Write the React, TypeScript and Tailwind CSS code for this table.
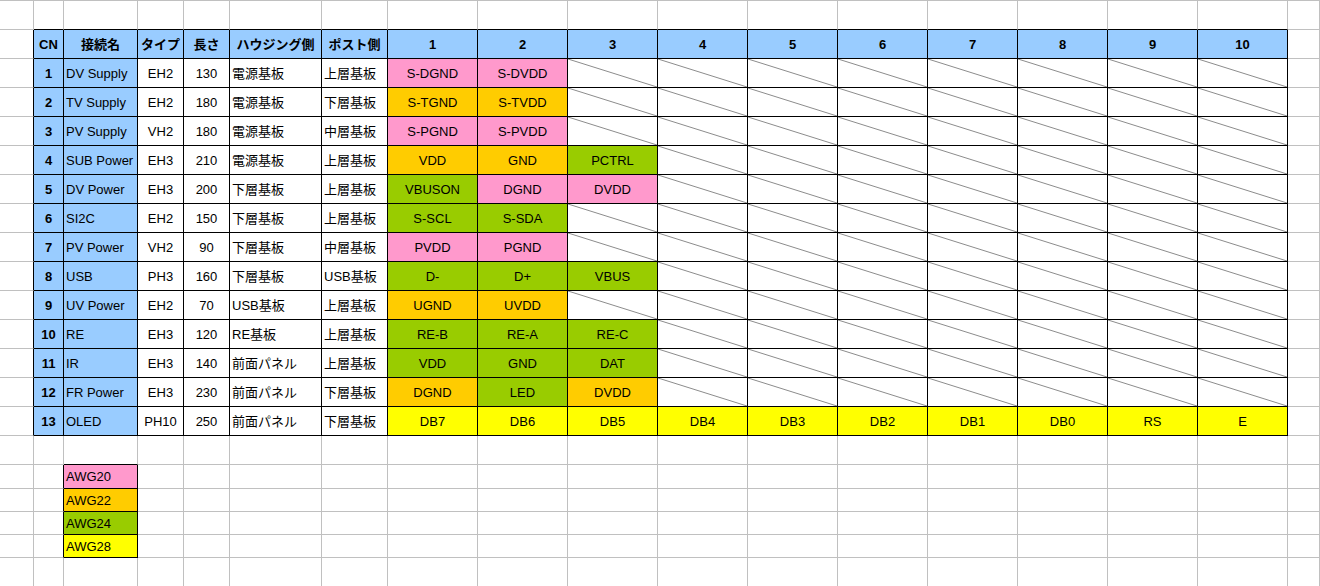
type Pin = [string, "P" | "O" | "G" | "Y"];

type Row = {
  cn: number;
  name: string;
  type: string;
  len: number;
  housing: string;
  post: string;
  pins: Pin[];
};

const fill = {
  P: "bg-[#ff99cc]",
  O: "bg-[#ffcc00]",
  G: "bg-[#99cc00]",
  Y: "bg-[#ffff00]",
};

const headers = ["CN", "接続名", "タイプ", "長さ", "ハウジング側", "ポスト側"];

const rows: Row[] = [
  { cn: 1, name: "DV Supply", type: "EH2", len: 130, housing: "電源基板", post: "上層基板", pins: [["S-DGND", "P"], ["S-DVDD", "P"]] },
  { cn: 2, name: "TV Supply", type: "EH2", len: 180, housing: "電源基板", post: "下層基板", pins: [["S-TGND", "O"], ["S-TVDD", "O"]] },
  { cn: 3, name: "PV Supply", type: "VH2", len: 180, housing: "電源基板", post: "中層基板", pins: [["S-PGND", "P"], ["S-PVDD", "P"]] },
  { cn: 4, name: "SUB Power", type: "EH3", len: 210, housing: "電源基板", post: "上層基板", pins: [["VDD", "O"], ["GND", "O"], ["PCTRL", "G"]] },
  { cn: 5, name: "DV Power", type: "EH3", len: 200, housing: "下層基板", post: "上層基板", pins: [["VBUSON", "G"], ["DGND", "P"], ["DVDD", "P"]] },
  { cn: 6, name: "SI2C", type: "EH2", len: 150, housing: "下層基板", post: "上層基板", pins: [["S-SCL", "G"], ["S-SDA", "G"]] },
  { cn: 7, name: "PV Power", type: "VH2", len: 90, housing: "下層基板", post: "中層基板", pins: [["PVDD", "P"], ["PGND", "P"]] },
  { cn: 8, name: "USB", type: "PH3", len: 160, housing: "下層基板", post: "USB基板", pins: [["D-", "G"], ["D+", "G"], ["VBUS", "G"]] },
  { cn: 9, name: "UV Power", type: "EH2", len: 70, housing: "USB基板", post: "上層基板", pins: [["UGND", "O"], ["UVDD", "O"]] },
  { cn: 10, name: "RE", type: "EH3", len: 120, housing: "RE基板", post: "上層基板", pins: [["RE-B", "G"], ["RE-A", "G"], ["RE-C", "G"]] },
  { cn: 11, name: "IR", type: "EH3", len: 140, housing: "前面パネル", post: "上層基板", pins: [["VDD", "G"], ["GND", "G"], ["DAT", "G"]] },
  { cn: 12, name: "FR Power", type: "EH3", len: 230, housing: "前面パネル", post: "下層基板", pins: [["DGND", "O"], ["LED", "G"], ["DVDD", "O"]] },
  {
    cn: 13, name: "OLED", type: "PH10", len: 250, housing: "前面パネル", post: "下層基板",
    pins: [["DB7", "Y"], ["DB6", "Y"], ["DB5", "Y"], ["DB4", "Y"], ["DB3", "Y"], ["DB2", "Y"], ["DB1", "Y"], ["DB0", "Y"], ["RS", "Y"], ["E", "Y"]],
  },
];

const legend: Pin[] = [["AWG20", "P"], ["AWG22", "O"], ["AWG24", "G"], ["AWG28", "Y"]];

const ROWS = 21;
const COLS = 18;

// table: rows 1-14, cols 1-16 ; legend: rows 16-19, col 2
function boxed(r: number, c: number) {
  if (r >= 1 && r <= 14 && c >= 1 && c <= 16) return true;
  if (r >= 16 && r <= 19 && c === 2) return true;
  return false;
}

type Info = { text?: string | number; bg?: string; left?: boolean; bold?: boolean; diag?: boolean };

function info(r: number, c: number): Info {
  if (r === 1 && c >= 1 && c <= 6) return { text: headers[c - 1], bg: "bg-[#99ccff]", bold: true };
  if (r === 1 && c >= 7 && c <= 16) return { text: c - 6, bg: "bg-[#99ccff]", bold: true };
  if (r >= 2 && r <= 14 && c >= 1 && c <= 16) {
    const d = rows[r - 2];
    if (c === 1) return { text: d.cn, bg: "bg-[#99ccff]", bold: true };
    if (c === 2) return { text: d.name, bg: "bg-[#99ccff]", left: true };
    if (c === 3) return { text: d.type };
    if (c === 4) return { text: d.len };
    if (c === 5) return { text: d.housing, left: true };
    if (c === 6) return { text: d.post, left: true };
    const p = d.pins[c - 7];
    if (p) return { text: p[0], bg: fill[p[1]] };
    return { diag: true };
  }
  if (r >= 16 && r <= 19 && c === 2) {
    const l = legend[r - 16];
    return { text: l[0], bg: fill[l[1]], left: true };
  }
  return {};
}

function Cell({ r, c }: { r: number; c: number }) {
  const i = info(r, c);
  const rightBlack = boxed(r, c) || boxed(r, c + 1);
  const bottomBlack = boxed(r, c) || boxed(r + 1, c);
  return (
    <div
      className={[
        "relative flex items-center overflow-hidden whitespace-nowrap border-r border-b",
        r === 0 ? "border-t border-t-[#c0c0c0]" : "",
        rightBlack ? "border-r-black" : "border-r-[#c0c0c0]",
        bottomBlack ? "border-b-black" : "border-b-[#c0c0c0]",
        i.left ? "justify-start pl-[2px]" : "justify-center",
        i.bold ? "font-bold" : "",
        i.bg ?? "bg-white",
      ].join(" ")}
    >
      {i.diag && (
        <svg className="absolute inset-0 h-full w-full" preserveAspectRatio="none">
          <line x1="0" y1="0" x2="100%" y2="100%" stroke="#8c8c8c" strokeWidth="1" />
        </svg>
      )}
      {i.text !== undefined && <span className="leading-none">{i.text}</span>}
    </div>
  );
}

export default function App() {
  const cells = [];
  for (let r = 0; r < ROWS; r++) {
    for (let c = 0; c < COLS; c++) {
      cells.push(<Cell key={`${r}-${c}`} r={r} c={c} />);
    }
  }
  return (
    <div className="h-[586px] w-[1320px] overflow-hidden bg-white font-['Liberation_Sans','Noto_Sans_CJK_JP',sans-serif] text-[13px] text-black">
      <div className="grid grid-cols-[34px_30px_74px_46px_46px_92px_66px_repeat(10,90px)_32px] grid-rows-[30px_repeat(15,29px)_24px_23px_23px_23px_29px]">
        {cells}
      </div>
    </div>
  );
}
